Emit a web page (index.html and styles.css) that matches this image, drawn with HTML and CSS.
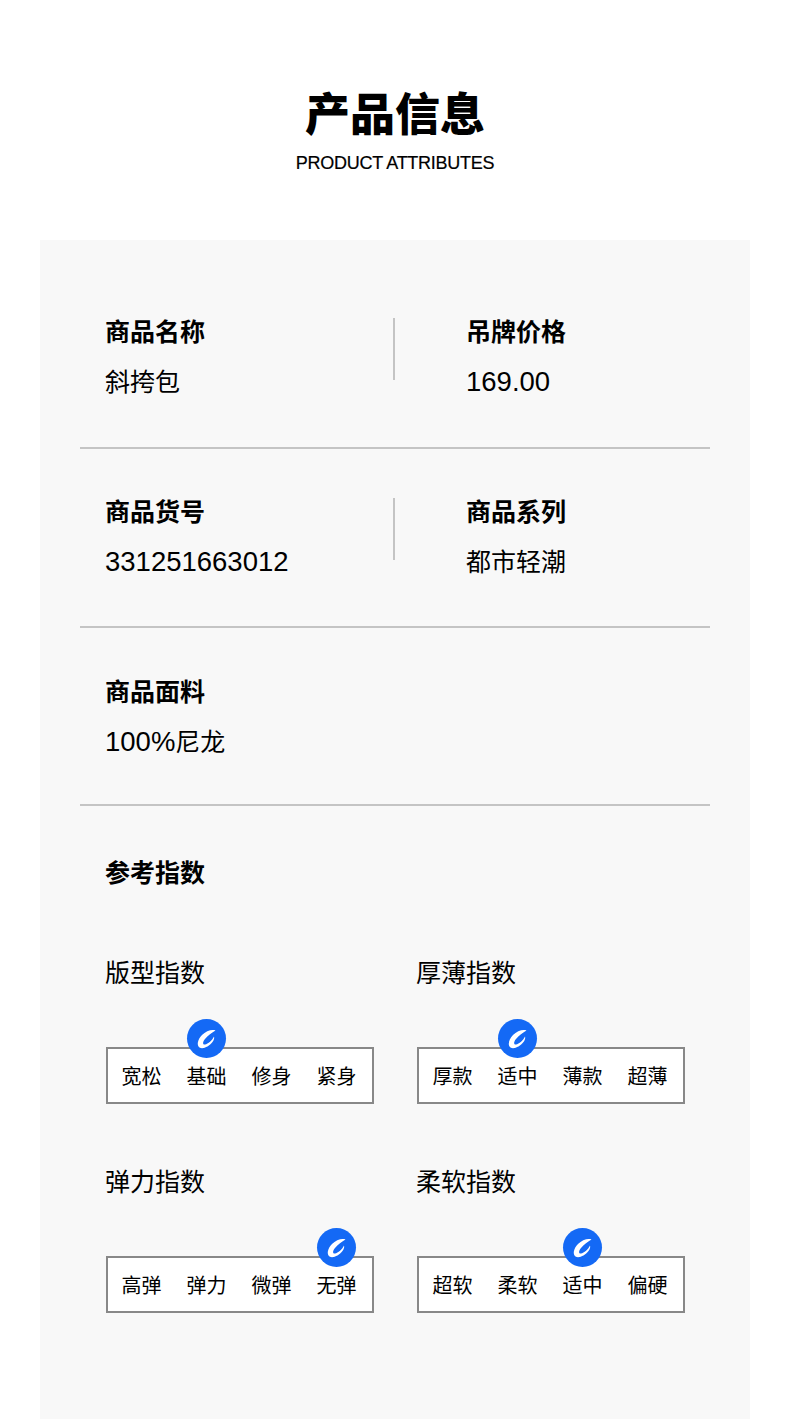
FILE: index.html
```html
<!DOCTYPE html>
<html lang="zh-CN">
<head>
<meta charset="utf-8">
<title>产品信息</title>
<link rel="stylesheet" href="styles.css">
</head>
<body>
<svg class="defs" width="0" height="0" aria-hidden="true"><defs>
<symbol id="logo" viewBox="0 0 39 39"><path fill="#fff" fill-rule="evenodd" d="M28.500 11.500C25 10 19 12 15 16C10.500 20.500 9.500 26.500 12.500 28.500C16 30.500 22 27.500 25.500 23C27 21 27.500 19 27 17.500C25.500 21 21 25 18 25.500C15.500 26 15.500 23 18 20C20.800 16.500 25 13.500 28.500 11.500Z"/></symbol>
</defs></svg>
<header class="head">
  <h1 class="title">产品信息</h1>
  <p class="subtitle">PRODUCT ATTRIBUTES</p>
</header>
<main class="panel">
  <section class="row row-split">
    <div class="cell cell-left"><h2 class="label">商品名称</h2><p class="value">斜挎包</p></div>
    <div class="cell cell-right"><h2 class="label">吊牌价格</h2><p class="value"><span class="num">169.00</span></p></div>
  </section>
  <section class="row row-split">
    <div class="cell cell-left"><h2 class="label">商品货号</h2><p class="value"><span class="num">331251663012</span></p></div>
    <div class="cell cell-right"><h2 class="label">商品系列</h2><p class="value">都市轻潮</p></div>
  </section>
  <section class="row">
    <div class="cell"><h2 class="label">商品面料</h2><p class="value"><span class="num">100%</span>尼龙</p></div>
  </section>
  <section class="index">
    <h2 class="label">参考指数</h2>
    <div class="index-grid">
      <div class="gauge">
        <h3 class="gauge-name">版型指数</h3>
        <ul class="scale">
          <li>宽松</li>
          <li class="on">基础<svg class="badge"><use href="#logo"/></svg></li>
          <li>修身</li>
          <li>紧身</li>
        </ul>
      </div>
      <div class="gauge">
        <h3 class="gauge-name">厚薄指数</h3>
        <ul class="scale">
          <li>厚款</li>
          <li class="on">适中<svg class="badge"><use href="#logo"/></svg></li>
          <li>薄款</li>
          <li>超薄</li>
        </ul>
      </div>
      <div class="gauge">
        <h3 class="gauge-name">弹力指数</h3>
        <ul class="scale">
          <li>高弹</li>
          <li>弹力</li>
          <li>微弹</li>
          <li class="on">无弹<svg class="badge"><use href="#logo"/></svg></li>
        </ul>
      </div>
      <div class="gauge">
        <h3 class="gauge-name">柔软指数</h3>
        <ul class="scale">
          <li>超软</li>
          <li>柔软</li>
          <li class="on">适中<svg class="badge"><use href="#logo"/></svg></li>
          <li>偏硬</li>
        </ul>
      </div>
    </div>
  </section>
</main>
</body>
</html>
```
FILE: styles.css
```css
* { box-sizing: border-box; margin: 0; padding: 0; }
html, body { height: 100%; }
body {
  background: #fff;
  color: #000;
  font-family: "Liberation Sans", "Noto Sans CJK SC", sans-serif;
  overflow: hidden;
}
.defs { position: absolute; }
.head { height: 240px; padding-top: 85px; text-align: center; }
.title { font-size: 45px; line-height: 62px; font-weight: 900; }
.subtitle { font-size: 18px; line-height: 24px; margin-top: 4px; letter-spacing: -0.28px; -webkit-text-stroke: 0.2px #000; }
.panel { margin: 0 40px; padding: 0 40px; height: 1179px; background: #f8f8f8; }
.row { display: flex; height: 179px; padding-top: 49px; border-bottom: 2px solid #c4c4c4; }
.row:first-child { height: 209px; padding-top: 78px; }
.row:nth-child(3) { height: 178px; padding-top: 50px; }
.cell { padding-left: 25px; }
.cell-left { width: 315px; height: 62px; border-right: 2px solid #c4c4c4; }
.cell-right { padding-left: 71px; }
.label { font-size: 25px; line-height: 30px; font-weight: 700; }
.cell .label { margin-top: -1px; }
.value { font-size: 25px; line-height: 30px; margin-top: 20px; }
.num { font-size: 27.5px; line-height: 1; }
.index { padding: 52px 25px 0; }
.index-grid { display: grid; grid-template-columns: 268px 268px; column-gap: 43px; row-gap: 63px; margin-top: 70px; }
.gauge-name { font-size: 25px; line-height: 30px; font-weight: 400; }
.scale {
  list-style: none;
  display: flex;
  justify-content: space-between;
  margin: 59px -1px 0 1px;
  padding: 0 15.500px 0 13.500px;
  height: 57px;
  background: #fff;
  border: 2px solid #888;
}
.scale li { position: relative; font-size: 20px; line-height: 57px; height: 53px; white-space: nowrap; }
.badge {
  position: absolute;
  left: 0;
  right: 0;
  top: -30px;
  margin: 0 auto;
  width: 39px;
  height: 39px;
  border-radius: 50%;
  background: #1469f5;
}
```
